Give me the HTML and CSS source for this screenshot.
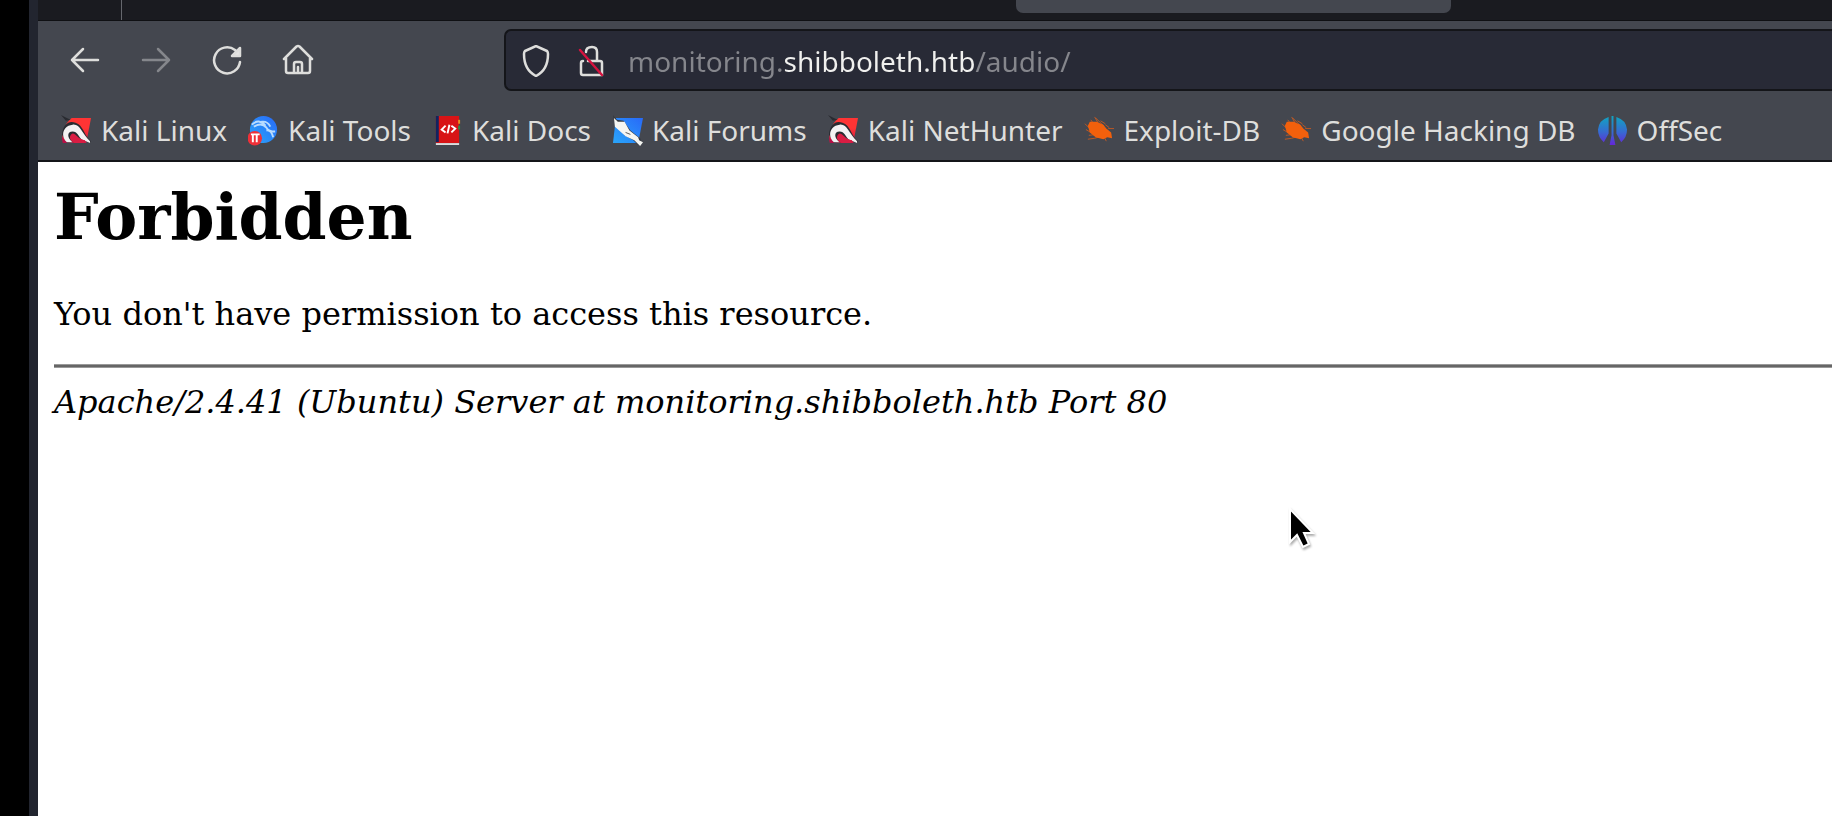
FILE: index.html
```html
<!DOCTYPE html>
<html lang="en">
<head>
<meta charset="utf-8">
<title>403 Forbidden</title>
<link rel="stylesheet" href="styles.css">
</head>
<body>
<svg class="defs" width="0" height="0" aria-hidden="true">
  <defs>
    <linearGradient id="blue" x1="1" y1="0" x2="0" y2="1"><stop offset="0" stop-color="#2869f8"/><stop offset="1" stop-color="#2aa6fa"/></linearGradient>
    <linearGradient id="red" x1="0" y1="0" x2="0" y2="1"><stop offset="0.4" stop-color="#ff3434"/><stop offset="1" stop-color="#c81745"/></linearGradient>
    <linearGradient id="violet" x1="0" y1="0" x2="0" y2="1"><stop offset="0" stop-color="#10a5c0"/><stop offset="0.55" stop-color="#366bd2"/><stop offset="1" stop-color="#6526d8"/></linearGradient>
    <symbol id="dragon" viewBox="0 0 32 32">
      <path d="M11 3h20l-5 26H2c-2-8 1-20 9-26z" fill="url(#red)"/>
      <path d="M0 0l6 3 4 2-5 1zM1 20C2 10 8 5 15 8c8 2 9 14 16 19l-1 2-9-4-8 3-7 1z" fill="#292b31"/>
      <path d="M6 28C-1 22 2 11 12 10c8-1 9 9 18 17v2l-9-4c-3-3-4-8-9-8-6 0-6 7 0 11z" fill="#f4f2f3"/>
      <path d="M14 29c-6-3-6-8-2-10 4 0 5 6 13 7l-1 3z" fill="#d91d43"/>
      <path d="M1 23l5 6H2z" fill="#b70e47"/>
    </symbol>
    <symbol id="bug" viewBox="0 0 32 32">
      <path d="M7 5l3 4M11 2l4 7M17 6l5 3M22 10l4 3M31 14h-6M28 20l-4-2M1 9l5 5M2 15l5 3M4 25l7-1 7-2M20 21l3 6M12 3l8 8M5 21l8-1" fill="none" stroke="#bc5925"/>
      <path d="M4 11l2-4 7 0 7 3 3 4 5 4 1 6-5-1-4 2-8-2-6-5z" fill="#f2600c"/>
    </symbol>
  </defs>
</svg>
<div class="desktop">
  <div class="window">
    <header>
      <div class="tabs"><span class="pinned"></span><span class="tab"></span></div>
      <div class="toolbar">
        <nav class="controls" aria-label="Navigation">
          <button aria-label="Back"><svg viewBox="0 0 32 32"><path d="M29 16H3M14 5L3 16l11 11"/></svg></button>
          <button aria-label="Forward" disabled><svg viewBox="0 0 32 32"><path d="M3 16h26M18 5l11 11-11 11"/></svg></button>
          <button aria-label="Reload"><svg viewBox="0 0 32 32"><path d="M29 18A13 13 0 1 1 24 6l3 3"/><path class="solid" d="M29 4v8h-8z"/></svg></button>
          <button aria-label="Home"><svg viewBox="0 0 32 32"><path d="M2 15L14.500 2.500q1.500-1 3 0L30 15M4 14v13q0 2 2 2h20q2 0 2-2V14M12 29V20q0-2 2-2h4q2 0 2 2v9M16 23v6"/></svg></button>
        </nav>
        <div class="address-bar">
          <button aria-label="Tracking protection"><svg viewBox="0 0 32 32"><path d="M16 1l11 5q1 1 1 3c0 11-4 18-12 22C8 27 4 20 4 9q0-2 1-3z"/></svg></button>
          <button aria-label="Connection not secure"><svg viewBox="0 0 32 32"><path d="M12 7q0-5 6-5 5 0 5 5v9M9 16q-2 0-2 2v10q0 2 2 2h19V18q0-2-2-2H14"/><path class="slash" d="M6 5l22 25"/></svg></button>
          <input class="url" type="text" aria-label="Address" value="monitoring.shibboleth.htb/audio/" spellcheck="false">
        </div>
      </div>
      <nav class="bookmarks" aria-label="Bookmarks">
        <a href="#"><svg viewBox="0 0 32 32"><use href="#dragon"/></svg>Kali Linux</a>
        <a href="#"><svg viewBox="0 0 32 32"><circle cx="16" cy="15" r="14" fill="url(#blue)"/><path d="M4 10Q11 3 18 11M6 12q8-5 13 1 2 4 9 4M14 7q6-1 9 5M19 16q5-1 7 7" fill="none" stroke="#b9dcff" stroke-width="2"/><circle cx="7" cy="24" r="7.500" fill="#ef3038"/><path d="M3 20h9M5 20v8M9 20v8" stroke="#fff" stroke-width="2"/></svg>Kali Tools</a>
        <a href="#"><svg viewBox="0 0 32 32"><path d="M4 1h24v28H4z" fill="#d81416"/><path d="M4 1h3v27H4z" fill="#13235f"/><path d="M4 29h24v2H4z" fill="#ddd"/><path d="M28 5v4" stroke="#e69522" stroke-width="2"/><path d="M28 11v4" stroke="#278c4a" stroke-width="2"/><path d="M14 11l-4 4 4 3M20 11l4 3-4 4M18 10l-2 9" fill="none" stroke="#fff" stroke-width="2"/></svg>Kali Docs</a>
        <a href="#"><svg viewBox="0 0 32 32"><path d="M4 3h28l-5 26H1z" fill="url(#blue)"/><path d="M1 0l4 5 7 1 7 10 10 8 2 5-4 2-5-5-9-5L3 9z" fill="#34383f"/><path d="M2 3l4 4 7 0 5 9 9 7 1 3 4 2-3 4-6-6-9-4L3 12z" fill="#f5f5f2"/><path d="M14 18l5 2" stroke="#555"/></svg>Kali Forums</a>
        <a href="#"><svg viewBox="0 0 32 32"><use href="#dragon"/></svg>Kali NetHunter</a>
        <a href="#"><svg viewBox="0 0 32 32"><use href="#bug"/></svg>Exploit-DB</a>
        <a href="#"><svg viewBox="0 0 32 32"><use href="#bug"/></svg>Google Hacking DB</a>
        <a href="#"><svg viewBox="0 0 32 32"><path d="M12 2v17L7 28Q1 23 1 15 2 5 12 2zM20 2v17l5 9q6-5 6-13Q30 5 20 2zM15 1h2v20l2 10h-6l2-10z" fill="url(#violet)"/></svg>OffSec</a>
      </nav>
    </header>
    <main>
      <h1>Forbidden</h1>
      <p>You don't have permission to access this resource.</p>
      <hr>
      <address>Apache/2.4.41 (Ubuntu) Server at monitoring.shibboleth.htb Port 80</address>
    </main>
  </div>
</div>
<svg class="cursor" viewBox="0 0 28 44" aria-hidden="true"><path d="M3 3v33l7-7 6 12 6-3-5-11h9z"/></svg>
</body>
</html>
```
FILE: styles.css
```css
* { box-sizing: border-box; }
body { margin: 0; overflow: hidden; }
.defs { position: absolute; }
.desktop { min-height: 100vh; padding-left: 29px; background: #000; display: flex; }
.window { flex: 1; min-width: 0; border-left: 9px solid #22252f; background: #fff; }
header { background: #44474f; border-bottom: 2px solid #141519; font-family: "Noto Sans", sans-serif; }

.tabs { height: 21px; display: flex; align-items: flex-start; background: #1a1b20; border-bottom: 1px solid #0f1013; }
.pinned { width: 84px; height: 20px; border-right: 1px solid #65676d; }
.tab { width: 435px; height: 13px; margin-left: 894px; border-radius: 0 0 7px 7px; background: #44474f; }

.toolbar { display: flex; padding-top: 8px; gap: 190px; }
.controls { display: flex; gap: 39px; padding-left: 31px; align-items: center; }
button { display: flex; padding: 0; border: 0; background: none; }
button svg { width: 32px; height: 32px; fill: none; stroke: #dededc; stroke-width: 2.5; stroke-linejoin: round; stroke-linecap: round; }
button:disabled svg { stroke: #85878c; }
button .solid { fill: #e6e6e4; }
button .slash { stroke: #d5133f; }

.address-bar { flex: 1; min-width: 0; height: 62px; display: flex; align-items: center; gap: 22px; padding: 2px 0 0 14px; background: #282a36; border: 2px solid #141519; border-right: 0; border-radius: 7px 0 0 7px; }
.url { flex: 1; min-width: 0; padding: 0; border: 0; outline: 0; font: 28px/40px "Noto Sans", sans-serif; color: transparent; -webkit-text-fill-color: transparent; background: linear-gradient(to right, #85868c 154px, #f0f0ee 154px 348px, #85868c 348px); -webkit-background-clip: text; background-clip: text; }

.bookmarks { display: flex; gap: 21px; height: 69px; padding: 9px 0 0 23px; }
.bookmarks a { display: flex; align-items: center; gap: 9px; height: 60px; color: #dededc; font-size: 28px; line-height: 40px; text-decoration: none; white-space: nowrap; }
.bookmarks svg { width: 31px; height: 31px; flex: none; }

main { padding: 19px 0 0 16px; color: #000; font: 32px/36px "DejaVu Serif", serif; }
h1 { margin: 0 0 43px; font-size: 63px; line-height: 72px; }
p { margin: 0; }
hr { margin: 32px 0 16px; border: 0; height: 4px; background: #666; border-top: 1px solid #999; border-bottom: 1px solid #999; }
address { font-style: italic; }
.cursor { position: absolute; left: 1287px; top: 506px; width: 28px; height: 44px; fill: #000; stroke: #fff; stroke-width: 2; filter: drop-shadow(1px 2px 1px #0005); }
```
